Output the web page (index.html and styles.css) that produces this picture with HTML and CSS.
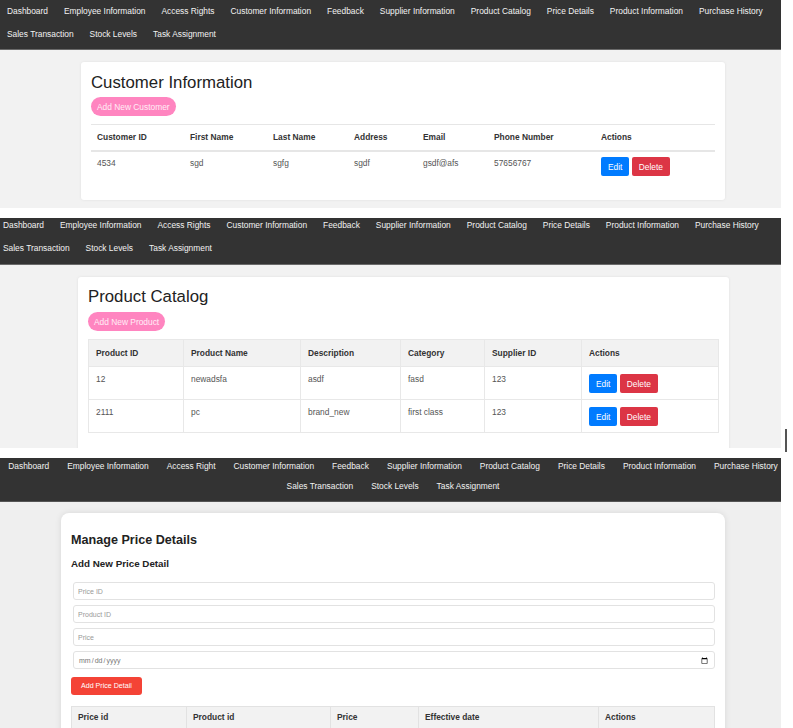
FILE: index.html
```html
<!DOCTYPE html>
<html lang="en">
<head>
  <meta charset="UTF-8">
  <meta name="viewport" content="width=device-width, initial-scale=1.0">
  <title>Admin Screens</title>
  <link rel="stylesheet" href="styles.css">
</head>
<body>
  <div class="page">

    <!-- customer information screen -->
    <section class="shot shot-customers">
      <nav class="topnav">
        <a href="#">Dashboard</a>
        <a href="#">Employee Information</a>
        <a href="#">Access Rights</a>
        <a href="#">Customer Information</a>
        <a href="#">Feedback</a>
        <a href="#">Supplier Information</a>
        <a href="#">Product Catalog</a>
        <a href="#">Price Details</a>
        <a href="#">Product Information</a>
        <a href="#">Purchase History</a>
        <a href="#">Sales Transaction</a>
        <a href="#">Stock Levels</a>
        <a href="#">Task Assignment</a>
      </nav>
      <div class="card card-customers">
        <h2 class="card-title">Customer Information</h2>
        <button class="btn-add">Add New Customer</button>
        <table class="table table-customers">
          <thead>
            <tr>
              <th>Customer ID</th>
              <th>First Name</th>
              <th>Last Name</th>
              <th>Address</th>
              <th>Email</th>
              <th>Phone Number</th>
              <th>Actions</th>
            </tr>
          </thead>
          <tbody>
            <tr>
              <td>4534</td>
              <td>sgd</td>
              <td>sgfg</td>
              <td>sgdf</td>
              <td>gsdf@afs</td>
              <td>57656767</td>
              <td><button class="btn btn-edit">Edit</button> <button class="btn btn-delete">Delete</button></td>
            </tr>
          </tbody>
        </table>
      </div>
    </section>

    <!-- product catalog screen -->
    <section class="shot shot-products">
      <nav class="topnav">
        <a href="#">Dashboard</a>
        <a href="#">Employee Information</a>
        <a href="#">Access Rights</a>
        <a href="#">Customer Information</a>
        <a href="#">Feedback</a>
        <a href="#">Supplier Information</a>
        <a href="#">Product Catalog</a>
        <a href="#">Price Details</a>
        <a href="#">Product Information</a>
        <a href="#">Purchase History</a>
        <a href="#">Sales Transaction</a>
        <a href="#">Stock Levels</a>
        <a href="#">Task Assignment</a>
      </nav>
      <div class="card card-products">
        <h2 class="card-title">Product Catalog</h2>
        <button class="btn-add">Add New Product</button>
        <table class="table table-products">
          <thead>
            <tr>
              <th>Product ID</th>
              <th>Product Name</th>
              <th>Description</th>
              <th>Category</th>
              <th>Supplier ID</th>
              <th>Actions</th>
            </tr>
          </thead>
          <tbody>
            <tr>
              <td>12</td>
              <td>newadsfa</td>
              <td>asdf</td>
              <td>fasd</td>
              <td>123</td>
              <td><button class="btn btn-edit">Edit</button> <button class="btn btn-delete">Delete</button></td>
            </tr>
            <tr>
              <td>2111</td>
              <td>pc</td>
              <td>brand_new</td>
              <td>first class</td>
              <td>123</td>
              <td><button class="btn btn-edit">Edit</button> <button class="btn btn-delete">Delete</button></td>
            </tr>
          </tbody>
        </table>
      </div>
    </section>

    <!-- price details screen -->
    <section class="shot shot-prices">
      <nav class="topnav topnav-center">
        <a href="#">Dashboard</a>
        <a href="#">Employee Information</a>
        <a href="#">Access Right</a>
        <a href="#">Customer Information</a>
        <a href="#">Feedback</a>
        <a href="#">Supplier Information</a>
        <a href="#">Product Catalog</a>
        <a href="#">Price Details</a>
        <a href="#">Product Information</a>
        <a href="#">Purchase History</a>
        <a href="#">Sales Transaction</a>
        <a href="#">Stock Levels</a>
        <a href="#">Task Assignment</a>
      </nav>
      <div class="card card-prices">
        <h2 class="prices-title">Manage Price Details</h2>
        <h3 class="prices-subtitle">Add New Price Detail</h3>
        <form class="price-form">
          <input type="text" placeholder="Price ID">
          <input type="text" placeholder="Product ID">
          <input type="text" placeholder="Price">
          <input type="date">
          <button type="button" class="btn-submit">Add Price Detail</button>
        </form>
        <table class="table table-prices">
          <thead>
            <tr>
              <th>Price id</th>
              <th>Product id</th>
              <th>Price</th>
              <th>Effective date</th>
              <th>Actions</th>
            </tr>
          </thead>
        </table>
      </div>
    </section>

    <div class="scroll-mark"></div>
  </div>
</body>
</html>
```

FILE: styles.css
```css
body {
  margin: 0;
  padding: 0;
  background: #fff;
  font-family: "Liberation Sans", Arial, sans-serif;
  color: #333;
}
.page {
  position: relative;
  width: 793px;
  height: 728px;
  overflow: hidden;
}
.shot {
  width: 781px;
  overflow: hidden;
  background-color: #f2f2f2;
}
.shot-customers {
  height: 208px;
  margin-bottom: 10px;
}
.shot-products {
  height: 230px;
  margin-bottom: 10px;
}
.shot-prices {
  height: 270px;
  background-color: #efefef;
}

/* top navigation */
.topnav {
  display: flex;
  flex-wrap: wrap;
  align-content: flex-start;
  column-gap: 16px;
  row-gap: 12px;
  box-sizing: border-box;
  height: 50px;
  padding: 6px 0 0 7px;
  background: #333;
  border-bottom: 1px solid #6a6a6a;
}
.topnav a {
  color: #f2f2f2;
  text-decoration: none;
  font-size: 8.4px;
  line-height: 11px;
  white-space: nowrap;
}
.shot-products .topnav {
  height: 51px;
  margin: -4px 0 0 -4px;
  width: 785px;
}
.topnav-center {
  justify-content: center;
  column-gap: 18px;
  row-gap: 9px;
  height: 44px;
  padding: 3px 0 0 5px;
  border-bottom: 1px solid #555;
}

/* cards */
.card {
  box-sizing: border-box;
  background: #fff;
  border-radius: 3px;
  box-shadow: 0 0 3px rgba(0, 0, 0, 0.08);
}
.card-customers {
  width: 644px;
  margin: 12px 0 0 81px;
  padding: 11px 10px 17px;
}
.card-products {
  width: 651px;
  margin: 12px 0 0 78px;
  padding: 10px 10px 20px;
}
.card-prices {
  width: 664px;
  margin: 11px 0 0 61px;
  padding: 20px 10px;
  border-radius: 8px;
  box-shadow: 0 0 6px rgba(0, 0, 0, 0.1);
}
.card-title {
  margin: 0;
  font-size: 16.8px;
  line-height: 20px;
  font-weight: normal;
  color: #222;
}
.btn-add {
  display: block;
  height: 19px;
  margin-top: 4px;
  padding: 0 6px;
  border: none;
  border-radius: 10px;
  background: #ff85c0;
  color: #ffeef6;
  font-family: inherit;
  font-size: 8.4px;
}
.card-products .btn-add {
  margin-top: 5px;
}

/* tables */
.table {
  width: 100%;
  table-layout: fixed;
  border-collapse: collapse;
  margin-top: 8px;
  font-size: 8.4px;
  line-height: 11px;
}
.table th,
.table td {
  box-sizing: border-box;
}
.table th {
  text-align: left;
  font-weight: bold;
  color: #333;
}
.table td {
  vertical-align: top;
  color: #555;
  white-space: nowrap;
}
.table-customers th {
  padding: 7px 6px;
  border-top: 1px solid #e6e6e6;
  border-bottom: 2px solid #e6e6e6;
}
.table-customers td {
  padding: 5px 6px 7px;
}
.table-customers td:not(:last-child) {
  padding-top: 6px;
}
.table-customers th:nth-child(1) { width: 93px; }
.table-customers th:nth-child(2) { width: 83px; }
.table-customers th:nth-child(3) { width: 81px; }
.table-customers th:nth-child(4) { width: 69px; }
.table-customers th:nth-child(5) { width: 71px; }
.table-customers th:nth-child(6) { width: 107px; }

.table-products th,
.table-products td {
  border: 1px solid #e8e8e8;
}
.table-products th {
  background: #f2f2f2;
  padding: 8px 7px 7px;
}
.table-products td {
  padding: 7px 7px 6px;
}
.table-products th:nth-child(1) { width: 95px; }
.table-products th:nth-child(2) { width: 117px; }
.table-products th:nth-child(3) { width: 100px; }
.table-products th:nth-child(4) { width: 84px; }
.table-products th:nth-child(5) { width: 97px; }

.btn {
  height: 19px;
  padding: 0 7px;
  border: none;
  border-radius: 2px;
  color: #fff;
  font-family: inherit;
  font-size: 8.4px;
  vertical-align: top;
}
.btn-edit {
  background: #007bff;
}
.btn-delete {
  background: #dc3545;
}

/* price details form */
.prices-title {
  margin: 0;
  font-size: 12.6px;
  line-height: 14px;
  color: #222;
}
.prices-subtitle {
  margin: 11px 0 0;
  font-size: 9.8px;
  line-height: 12px;
  color: #222;
}
.price-form {
  display: flex;
  flex-direction: column;
  align-items: flex-start;
  gap: 5px;
  margin-top: 12px;
}
.price-form input {
  box-sizing: border-box;
  width: calc(100% - 2px);
  height: 18px;
  margin-left: 2px;
  padding: 0 4px;
  border: 1px solid #e2e2e2;
  border-radius: 3px;
  font-family: inherit;
  font-size: 7px;
  color: #777;
}
.price-form input::placeholder {
  color: #999;
}
.btn-submit {
  height: 18px;
  margin-top: 3px;
  padding: 0 10px;
  border: none;
  border-radius: 3px;
  background: #f44336;
  color: #fff;
  font-family: inherit;
  font-size: 7.1px;
}
.table-prices {
  margin-top: 11px;
}
.table-prices th {
  background: #f2f2f2;
  padding: 5px 6px 6px;
  border: 1px solid #e2e2e2;
}
.table-prices th:nth-child(1) { width: 115px; }
.table-prices th:nth-child(2) { width: 144px; }
.table-prices th:nth-child(3) { width: 88px; }
.table-prices th:nth-child(4) { width: 180px; }

.scroll-mark {
  position: absolute;
  left: 785px;
  top: 429px;
  width: 2px;
  height: 23px;
  background: #555;
}
```
